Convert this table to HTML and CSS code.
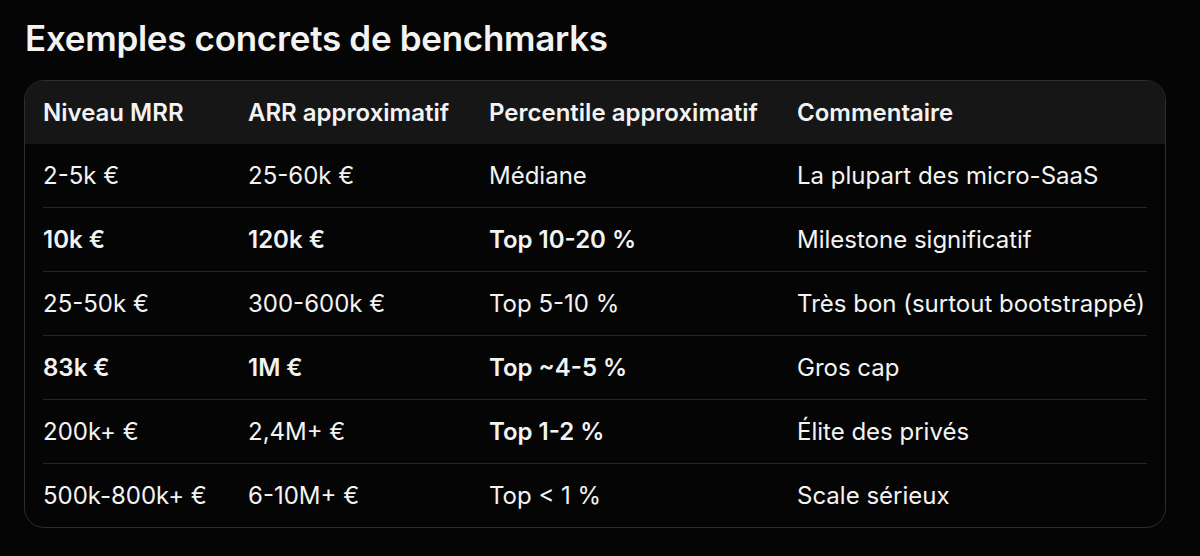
FILE: index.html
```html
<!DOCTYPE html>
<html lang="fr">
<head>
<meta charset="utf-8">
<link rel="stylesheet" href="styles.css">
</head>
<body>
<main class="page">
  <h2 class="title">Exemples concrets de benchmarks</h2>
  <div class="card">
    <div class="row head">
      <div>Niveau MRR</div>
      <div>ARR approximatif</div>
      <div>Percentile approximatif</div>
      <div>Commentaire</div>
    </div>
    <div class="row">
      <div>2-5k €</div><div>25-60k €</div><div>Médiane</div><div>La plupart des micro-SaaS</div>
    </div>
    <div class="row">
      <div class="b">10k €</div><div class="b">120k €</div><div class="b">Top 10-20 %</div><div>Milestone significatif</div>
    </div>
    <div class="row">
      <div>25-50k €</div><div>300-600k €</div><div>Top 5-10 %</div><div>Très bon (surtout bootstrappé)</div>
    </div>
    <div class="row">
      <div class="b">83k €</div><div class="b">1M €</div><div class="b">Top ~4-5 %</div><div>Gros cap</div>
    </div>
    <div class="row">
      <div>200k+ €</div><div>2,4M+ €</div><div class="b">Top 1-2 %</div><div>Élite des privés</div>
    </div>
    <div class="row last">
      <div>500k-800k+ €</div><div>6-10M+ €</div><div>Top &lt; 1 %</div><div>Scale sérieux</div>
    </div>
  </div>
</main>
</body>
</html>
```

FILE: styles.css
```css
html, body {
  margin: 0;
  padding: 0;
  background: #050505;
}
body {
  font-family: Inter, "Noto Sans", sans-serif;
  color: #f3f3f3;
}
.page {
  padding: 17px 34px 0 24px;
}
.title {
  margin: 0 0 21px 1px;
  font-size: 35px;
  font-weight: 600;
  letter-spacing: -0.3px;
  line-height: 42px;
}
.card {
  border: 1px solid #2e2e2e;
  border-radius: 20px;
  overflow: hidden;
  background: #050505;
  font-size: 24px;
}
.row {
  display: grid;
  grid-template-columns: 205px 241px 308px 1fr;
  align-items: center;
  height: 63px;
  margin: 0 18px;
  border-bottom: 1px solid #262626;
  white-space: nowrap;
}
.row.head {
  margin: 0;
  padding: 0 18px;
  background: #161616;
  border-bottom: none;
  font-weight: 600;
}
.row.last {
  border-bottom: none;
}
.b {
  font-weight: 600;
}
```
